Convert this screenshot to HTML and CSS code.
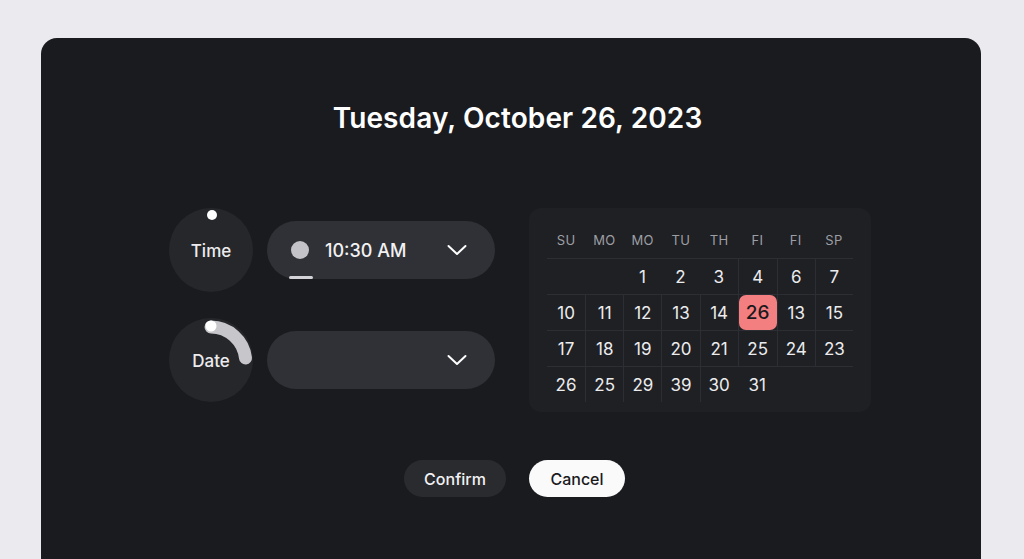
FILE: index.html
```html
<!DOCTYPE html>
<html lang="en">
<head>
<meta charset="UTF-8">
<meta name="viewport" content="width=device-width, initial-scale=1.0">
<title>Pick a date</title>
<link rel="stylesheet" href="styles.css">
</head>
<body>

<div class="card">
    <h1 class="title">Tuesday, October 26, 2023</h1>

    <div class="picker">
        <div class="fields">
            <div class="field">
                <div class="knob">
                    <svg width="84" height="84" viewBox="0 0 84 84">
                        <circle cx="43" cy="7" r="5" fill="#fff"/>
                    </svg>
                    <span>Time</span>
                </div>
                <div class="select">
                    <span class="dot"></span>
                    <span class="value">10:30 AM</span>
                    <svg class="chev" width="22" height="12" viewBox="0 0 22 12">
                        <path d="M2.5 2l8.5 8 8.5-8" fill="none" stroke="#fff" stroke-width="2" stroke-linecap="round" stroke-linejoin="round"/>
                    </svg>
                    <span class="bar"></span>
                </div>
            </div>
            <div class="field">
                <div class="knob">
                    <svg width="84" height="84" viewBox="0 0 84 84">
                        <path d="M42 9 A35 35 0 0 1 76.5 40" fill="none" stroke="#c7c7cb" stroke-width="13" stroke-linecap="round"/>
                        <circle cx="42" cy="8" r="5.5" fill="#fff"/>
                    </svg>
                    <span>Date</span>
                </div>
                <div class="select">
                    <span class="value"></span>
                    <svg class="chev" width="22" height="12" viewBox="0 0 22 12">
                        <path d="M2.5 2l8.5 8 8.5-8" fill="none" stroke="#fff" stroke-width="2" stroke-linecap="round" stroke-linejoin="round"/>
                    </svg>
                </div>
            </div>
        </div>

        <div class="calendar">
            <div class="days">
                <span>SU</span><span>MO</span><span>MO</span><span>TU</span>
                <span>TH</span><span>FI</span><span>FI</span><span>SP</span>
            </div>
            <div class="grid">
                <span></span><span></span><span>1</span><span>2</span>
                <span>3</span><span class="bl">4</span><span class="bl">6</span><span class="bl">7</span>

                <span>10</span><span class="bl">11</span><span class="bl">12</span><span class="bl">13</span>
                <span class="bl">14</span><span class="bl"><b class="today">26</b></span><span class="bl">13</span><span class="bl">15</span>

                <span>17</span><span class="bl">18</span><span class="bl">19</span><span class="bl">20</span>
                <span class="bl">21</span><span class="bl">25</span><span class="bl">24</span><span class="bl">23</span>

                <span>26</span><span class="bl">25</span><span class="bl">29</span><span class="bl">39</span>
                <span class="bl">30</span><span>31</span><span></span><span></span>
            </div>
        </div>
    </div>

    <div class="actions">
        <button class="btn confirm">Confirm</button>
        <button class="btn cancel">Cancel</button>
    </div>
</div>

</body>
</html>
```

FILE: styles.css
```css
body {
    margin: 0;
    padding: 38px 43px 0 41px;
    background-color: #ebebef;
    font-family: Inter, "Noto Sans", sans-serif;
    overflow: hidden;
}
.card {
    background-color: #1a1b1f;
    border-radius: 16px 16px 0 0;
    height: 521px;
    padding-top: 62px;
    box-sizing: border-box;
    display: flex;
    flex-direction: column;
    align-items: center;
}
.title {
    margin: 0;
    padding-left: 13px;
    color: #fff;
    font-size: 28px;
    font-weight: 600;
    line-height: 36px;
    letter-spacing: 0.1px;
}
.picker {
    display: flex;
    align-items: flex-start;
    gap: 34px;
    margin-top: 72px;
    padding-left: 18px;
}
.fields {
    display: flex;
    flex-direction: column;
    gap: 26px;
}
.field {
    display: flex;
    align-items: center;
    gap: 14px;
}
.knob {
    width: 84px;
    height: 84px;
    border-radius: 50%;
    background-color: #26272b;
    display: flex;
    align-items: center;
    justify-content: center;
    position: relative;
}
.knob svg {
    position: absolute;
    left: 0;
    top: 0;
}
.knob span {
    position: relative;
    color: #ececee;
    font-size: 17px;
    font-weight: 500;
    margin-top: 2px;
}
.select {
    width: 228px;
    height: 58px;
    border-radius: 29px;
    background-color: #303136;
    display: flex;
    align-items: center;
    padding: 0 27px 0 24px;
    box-sizing: border-box;
    position: relative;
}
.dot {
    width: 18px;
    height: 18px;
    border-radius: 50%;
    background-color: #c4c4c8;
    margin-right: 16px;
}
.value {
    flex: 1;
    color: #f2f2f4;
    font-size: 18px;
    font-weight: 500;
}
.bar {
    position: absolute;
    left: 22px;
    bottom: 0;
    width: 24px;
    height: 3px;
    border-radius: 2px;
    background-color: #d4d4d8;
}
.calendar {
    width: 342px;
    background-color: #1f2024;
    border-radius: 12px;
    padding: 14px 18px 10px;
    box-sizing: border-box;
}
.days,
.grid {
    display: grid;
    grid-template-columns: repeat(8, 1fr);
}
.days span {
    height: 36px;
    line-height: 36px;
    text-align: center;
    color: #9d9ea3;
    font-size: 13px;
    letter-spacing: 0.3px;
}
.grid span {
    height: 36px;
    border-top: 1px solid #2d2e33;
    box-sizing: border-box;
    display: flex;
    align-items: center;
    justify-content: center;
    color: #ececee;
    font-size: 17px;
}
.grid .bl {
    border-left: 1px solid #2d2e33;
}
.today {
    width: 38px;
    height: 35px;
    border-radius: 7px;
    background-color: #f47f81;
    color: #1a1a1c;
    font-size: 19px;
    font-weight: 500;
    display: flex;
    align-items: center;
    justify-content: center;
}
.actions {
    display: flex;
    gap: 23px;
    margin-top: 48px;
    padding-left: 7px;
}
.btn {
    height: 37px;
    border: none;
    border-radius: 19px;
    font-family: inherit;
    font-size: 16px;
    font-weight: 500;
    cursor: pointer;
}
.confirm {
    width: 102px;
    background-color: #2a2b2f;
    color: #f2f2f4;
}
.cancel {
    width: 96px;
    background-color: #fafafa;
    color: #1a1a1e;
}
```
